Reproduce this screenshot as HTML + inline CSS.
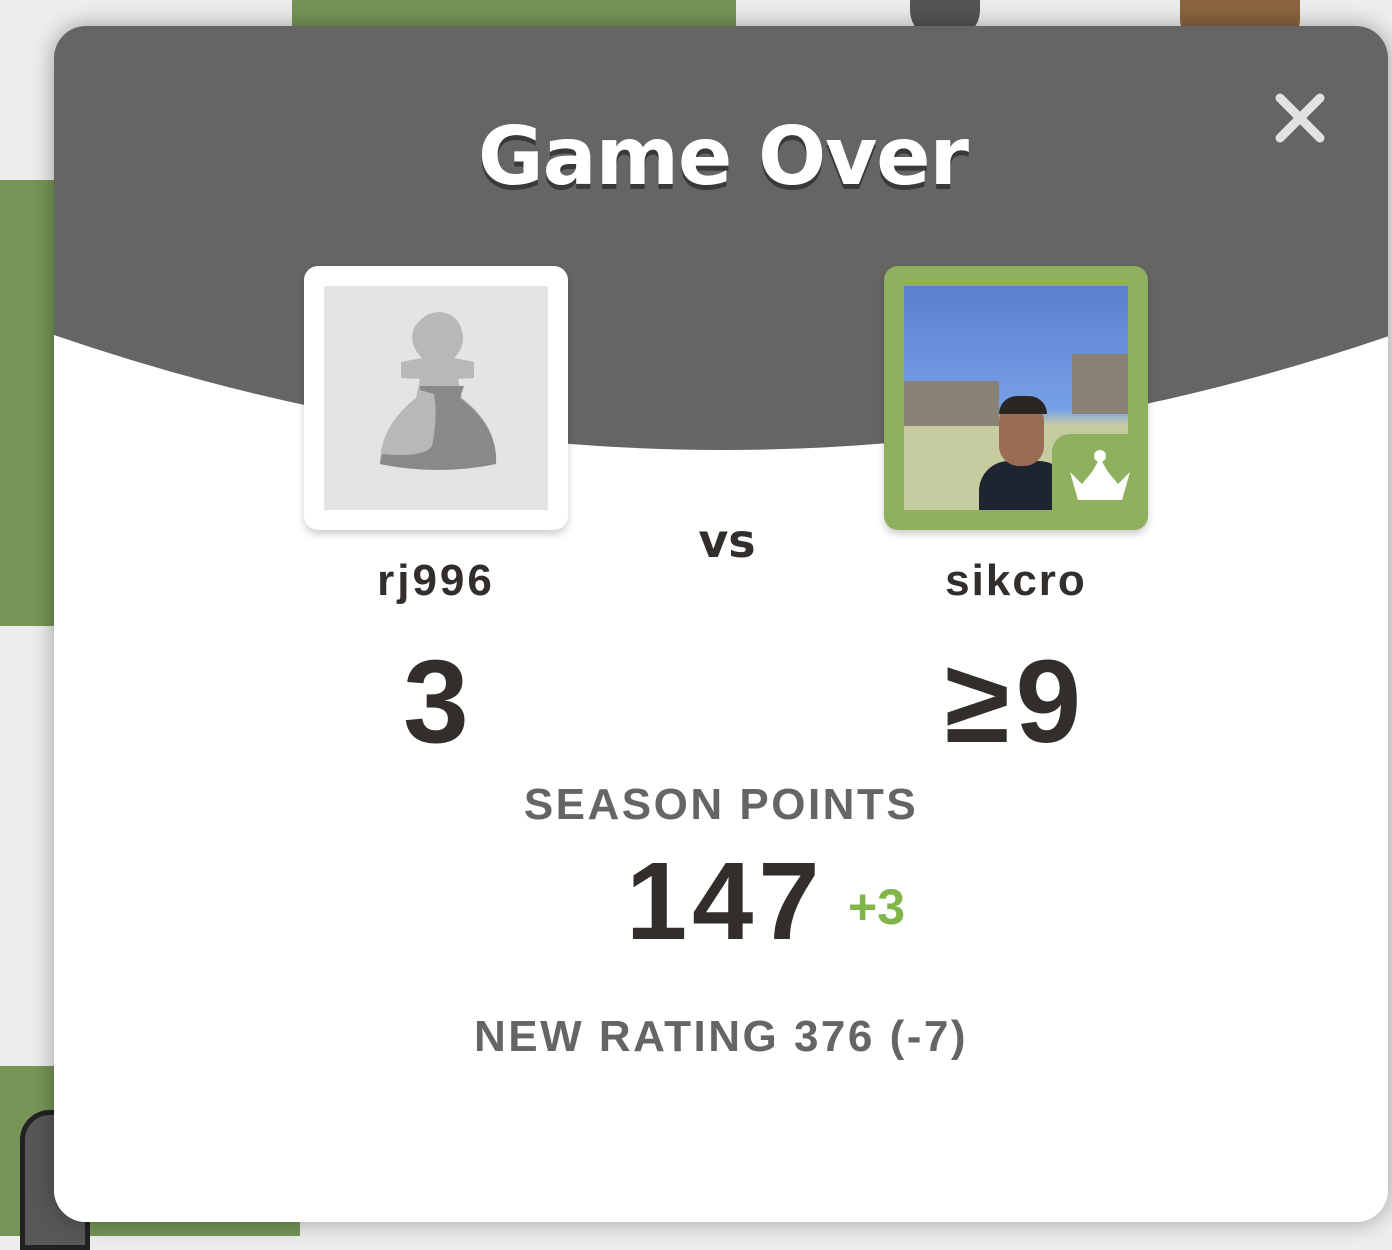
<!DOCTYPE html>
<html><head><meta charset="utf-8"><style>
html,body{margin:0;padding:0;width:1392px;height:1228px;overflow:hidden;background:#eeeeed;font-family:"Liberation Sans",sans-serif}
.sq{position:absolute}
.modal{position:absolute;left:54px;top:26px;width:1334px;height:1196px;border-radius:32px;overflow:hidden;background:#fff;box-shadow:0 0 24px rgba(0,0,0,.35)}
.t{position:absolute;left:0;width:100%;text-align:center;font-weight:bold}
</style></head><body>
<div class="sq" style="left:292px;top:0;width:444px;height:40px;background:#779556"></div>
<div class="sq" style="left:0;top:180px;width:60px;height:446px;background:#779556"></div>
<div class="sq" style="left:0;top:1066px;width:300px;height:170px;background:#779556"></div>
<div class="sq" style="left:1180px;top:0;width:120px;height:40px;background:#8b6540;border-radius:0 0 20px 20px"></div>
<div class="sq" style="left:910px;top:0;width:70px;height:40px;background:#555;border-radius:0 0 30px 30px"></div>
<div class="sq" style="left:20px;top:1110px;width:60px;height:130px;background:#5a5856;border-radius:30px 30px 0 0;border:5px solid #222"></div>
<div class="modal">
<svg width="1334" height="1196" style="position:absolute;left:0;top:0">
<rect x="0" y="0" width="1334" height="600" fill="#666564"/>
<path d="M0 309 Q669 539 1338 309 L1338 1196 L0 1196 Z" fill="#fff"/>
<path d="M1226 72 L1266 112 M1266 72 L1226 112" stroke="#e2e2e2" stroke-width="9" stroke-linecap="round"/>
</svg>
<div class="t" style="top:84px;font-size:80px;color:#fff;text-shadow:0 5px 0 #3a3937;letter-spacing:-1px;font-family:'DejaVu Sans',sans-serif;left:2px">Game Over</div>
<div style="position:absolute;left:250px;top:240px;width:264px;height:264px;background:#fff;border-radius:14px;box-shadow:0 4px 8px rgba(0,0,0,.2)">
<div style="position:absolute;left:20px;top:20px;width:224px;height:224px;background:#e5e4e2">
<svg width="224" height="224" viewBox="0 0 224 224">
<path d="M56 178 Q56 140 92 112 L96 93 L77 92 L77 76 L98 72 Q84 58 90 42 Q100 26 116 26 Q134 28 138 45 Q142 60 130 72 L150 76 L150 92 L134 93 L138 112 Q174 140 172 178 Q115 190 56 178 Z" fill="#b9b8b6"/>
<path d="M96 100 L140 100 L136 112 Q174 140 172 178 Q115 190 56 178 L58 168 Q100 172 108 160 Q114 130 110 108 L96 104 Z" fill="#8a8988"/>
</svg></div></div>
<div style="position:absolute;left:830px;top:240px;width:264px;height:264px;background:#8fb15f;border-radius:14px;box-shadow:0 4px 8px rgba(0,0,0,.2)">
<div style="position:absolute;left:20px;top:20px;width:224px;height:224px;background:linear-gradient(#5b80cd,#76a0e8 55%,#c7c9aa 62%,#c8cfa8);overflow:hidden">
<div style="position:absolute;left:0;top:95px;width:95px;height:60px;background:#8a8275"></div>
<div style="position:absolute;left:168px;top:68px;width:56px;height:60px;background:#8a8275"></div>
<div style="position:absolute;left:0;top:140px;width:224px;height:84px;background:#c6cca0"></div>
<div style="position:absolute;left:75px;top:175px;width:90px;height:60px;background:#1f2530;border-radius:30px 30px 0 0"></div>
<div style="position:absolute;left:95px;top:115px;width:45px;height:65px;background:#9a6c52;border-radius:20px"></div>
<div style="position:absolute;left:95px;top:110px;width:48px;height:18px;background:#2a2623;border-radius:20px 20px 0 0"></div>
</div>
<div style="position:absolute;left:168px;top:168px;width:96px;height:96px;background:#8fb15f;border-radius:18px 0 14px 0">
<svg width="96" height="96" viewBox="0 0 96 96"><path d="M18 38 L30 50 L40 38 L48 24 L56 38 L66 50 L78 38 L70 66 L26 66 Z" fill="#fff"/><circle cx="48" cy="22" r="6" fill="#fff"/></svg></div>
</div>
<div class="t" style="top:488px;font-size:46px;color:#312e2b;font-family:'DejaVu Sans',sans-serif;left:6px">vs</div>
<div style="position:absolute;left:232px;width:300px;top:530px;text-align:center;font-size:44px;font-weight:bold;color:#312e2b;letter-spacing:3px">rj996</div>
<div style="position:absolute;left:812px;width:300px;top:530px;text-align:center;font-size:44px;font-weight:bold;color:#312e2b;letter-spacing:2px">sikcro</div>
<div style="position:absolute;left:232px;width:300px;top:608px;text-align:center;font-size:118px;font-weight:bold;color:#312e2b">3</div>
<div style="position:absolute;left:812px;width:300px;top:608px;text-align:center;font-size:118px;font-weight:bold;color:#312e2b;letter-spacing:6px">≥9</div>
<div class="t" style="top:754px;font-size:44px;color:#666564;left:0;letter-spacing:2.5px">SEASON POINTS</div>
<div style="position:absolute;left:572px;top:812px;font-size:110px;font-weight:bold;color:#312e2b;letter-spacing:5px">147</div>
<div style="position:absolute;left:794px;top:852px;font-size:50px;font-weight:bold;color:#81b64c">+3</div>
<div class="t" style="top:986px;font-size:44px;color:#666564;left:0;letter-spacing:2.5px">NEW RATING 376 (-7)</div>
</div>
</body></html>
